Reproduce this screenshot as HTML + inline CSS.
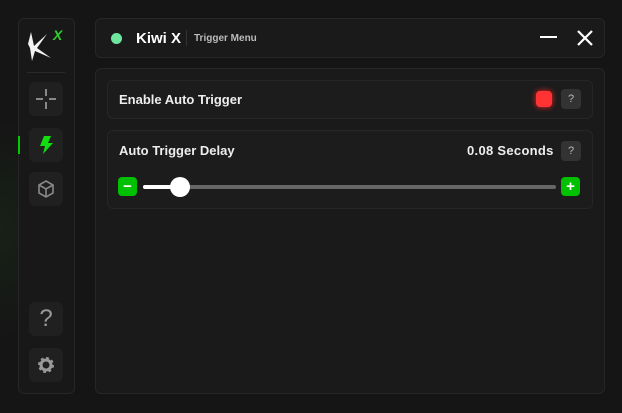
<!DOCTYPE html>
<html><head><style>
body{margin:0;width:622px;height:413px;background:#151515;font-family:"Liberation Sans",sans-serif;position:relative;overflow:hidden;color:#fff}
.glow{position:absolute;left:-80px;top:120px;width:160px;height:220px;background:radial-gradient(ellipse at center,rgba(40,120,40,.12),rgba(0,0,0,0) 70%)}
.p{position:absolute;background:#1a1a1a;border:1px solid #262626;border-radius:6px;box-sizing:border-box}
.b{position:absolute;left:29px;width:34px;height:34px;background:#202020;border-radius:6px;display:flex;align-items:center;justify-content:center}
.q{position:absolute;width:20px;height:20px;background:#333;border-radius:4px;color:#bbb;font-size:11px;display:flex;align-items:center;justify-content:center}
.t{position:absolute;font-weight:bold;font-size:13px;color:#eee}
.g{position:absolute;width:19px;height:19px;background:#00c000;border-radius:4px;color:#fff;display:flex;align-items:center;justify-content:center;font-weight:bold;font-size:15px}
</style></head><body>
<div class="glow"></div>
<div class="p" style="left:18px;top:18px;width:57px;height:376px;background:#181818"></div>
<svg style="position:absolute;left:27px;top:30px" width="32" height="34"><path d="M4 2l3 14 L20 4 L10 18 L24 28 L8 21 L5 31 L3 18 L1 14z" fill="#f2f2f2"/></svg>
<div style="position:absolute;left:53px;top:27px;font-size:14px;font-weight:bold;color:#3c3;font-style:italic">X</div>
<div style="position:absolute;left:27px;top:72px;width:38px;height:1px;background:#2a2a2a"></div>
<div class="b" style="top:82px"><svg width="22" height="22" stroke="#888" stroke-width="2"><path d="M11 1v7M11 14v7M1 11h7M14 11h7"/></svg></div>
<div style="position:absolute;left:18px;top:136px;width:2px;height:18px;background:#0c0"></div>
<div class="b" style="top:128px"><svg width="16" height="20"><path d="M6 1h7l-3 7h5L5 19l2-8H2z" fill="#1d1"/></svg></div>
<div class="b" style="top:172px"><svg width="20" height="20" fill="none" stroke="#888" stroke-width="1.6"><path d="M10 2l7 4v8l-7 4-7-4V6zM3 6l7 4 7-4M10 10v8"/></svg></div>
<div class="b" style="top:302px;color:#999;font-size:24px">?</div>
<div class="b" style="top:348px"><svg width="18" height="18"><circle cx="9" cy="9" r="6" fill="none" stroke="#999" stroke-width="4" stroke-dasharray="2.4 2.3"/><circle cx="9" cy="9" r="5" fill="none" stroke="#999" stroke-width="3"/></svg></div>
<div class="p" style="left:95px;top:18px;width:510px;height:40px"></div>
<div style="position:absolute;left:111px;top:33px;width:11px;height:11px;border-radius:50%;background:#6fe6a0"></div>
<div class="t" style="left:136px;top:30px;font-size:15px;color:#fff">Kiwi X</div>
<div style="position:absolute;left:186px;top:30px;width:1px;height:16px;background:#333"></div>
<div style="position:absolute;left:194px;top:33px;font-size:10px;font-weight:bold;color:#bbb">Trigger Menu</div>
<div style="position:absolute;left:540px;top:36px;width:17px;height:2px;background:#fff"></div>
<svg style="position:absolute;left:576px;top:29px" width="18" height="18" stroke="#fff" stroke-width="2.2"><path d="M2 2l14 14M16 2L2 16"/></svg>
<div class="p" style="left:95px;top:68px;width:510px;height:326px"></div>
<div class="p" style="left:107px;top:80px;width:486px;height:39px;background:#1c1c1c"></div>
<div class="t" style="left:119px;top:92px">Enable Auto Trigger</div>
<div style="position:absolute;left:536px;top:91px;width:16px;height:16px;border-radius:4px;background:#f33;box-shadow:0 0 6px #f22"></div>
<div class="q" style="left:561px;top:89px">?</div>
<div class="p" style="left:107px;top:130px;width:486px;height:79px;background:#1c1c1c"></div>
<div class="t" style="left:119px;top:143px">Auto Trigger Delay</div>
<div class="t" style="left:467px;top:143px;letter-spacing:.3px">0.08 Seconds</div>
<div class="q" style="left:561px;top:141px">?</div>
<div class="g" style="left:118px;top:177px">−</div>
<div style="position:absolute;left:143px;top:185px;width:413px;height:4px;border-radius:2px;background:#666"></div>
<div style="position:absolute;left:143px;top:185px;width:37px;height:4px;border-radius:2px;background:#fff"></div>
<div style="position:absolute;left:170px;top:177px;width:20px;height:20px;border-radius:50%;background:#fff"></div>
<div class="g" style="left:561px;top:177px">+</div>
</body></html>
